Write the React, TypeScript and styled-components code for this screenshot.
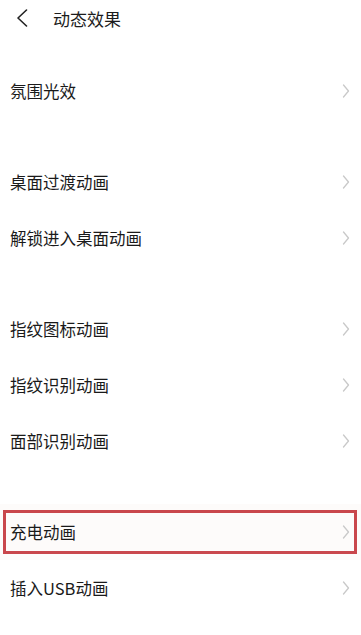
import React from "react";
import styled, { createGlobalStyle } from "styled-components";

const Global = createGlobalStyle`
  html, body { margin: 0; padding: 0; background: #ffffff; }
  body { font-family: "Noto Sans CJK SC", "Noto Sans", sans-serif; }
`;

const Page = styled.div`
  width: 361px;
  min-height: 635px;
  background: #ffffff;
  display: flex;
  flex-direction: column;
`;

const Header = styled.div`
  height: 36px;
  display: flex;
  align-items: center;
  padding-left: 16px;
  gap: 25px;
`;

const Title = styled.div`
  font-size: 17px;
  color: #1c1c1c;
  line-height: 1;
`;

const List = styled.div`
  display: flex;
  flex-direction: column;
  gap: 35px;
  padding-top: 27px;
`;

const Group = styled.div`
  display: flex;
  flex-direction: column;
`;

const Row = styled.div<{ $highlight?: boolean }>`
  position: relative;
  height: 56px;
  display: flex;
  align-items: center;
  justify-content: space-between;
  padding: 0 11px 0 10px;
  background: ${(p) => (p.$highlight ? "#fdfbfa" : "transparent")};
  ${(p) =>
    p.$highlight
      ? `&::after {
    content: "";
    position: absolute;
    left: 3px;
    right: 4px;
    top: 6px;
    bottom: 6px;
    border: 3px solid #c9474c;
    pointer-events: none;
  }`
      : ""}
`;

const Label = styled.span`
  font-size: 16.5px;
  color: #1a1a1a;
  line-height: 1;
`;

const Back = () => (
  <svg width="12" height="18" viewBox="0 0 12 18">
    <polyline
      points="10.5,1 2,9 10.5,17"
      fill="none"
      stroke="#222"
      strokeWidth="1.6"
      strokeLinecap="round"
      strokeLinejoin="round"
    />
  </svg>
);

const Chevron = () => (
  <svg width="8" height="14" viewBox="0 0 8 14">
    <polyline
      points="1.5,1 6.5,7 1.5,13"
      fill="none"
      stroke="#c9c9c9"
      strokeWidth="1.3"
      strokeLinecap="round"
      strokeLinejoin="round"
    />
  </svg>
);

const groups: { label: string; highlight?: boolean }[][] = [
  [{ label: "氛围光效" }],
  [{ label: "桌面过渡动画" }, { label: "解锁进入桌面动画" }],
  [{ label: "指纹图标动画" }, { label: "指纹识别动画" }, { label: "面部识别动画" }],
  [{ label: "充电动画", highlight: true }, { label: "插入USB动画" }],
];

export default function App() {
  return (
    <>
      <Global />
      <Page>
        <Header>
          <Back />
          <Title>动态效果</Title>
        </Header>
        <List>
          {groups.map((g, i) => (
            <Group key={i}>
              {g.map((item) => (
                <Row key={item.label} $highlight={item.highlight}>
                  <Label>{item.label}</Label>
                  <Chevron />
                </Row>
              ))}
            </Group>
          ))}
        </List>
      </Page>
    </>
  );
}
